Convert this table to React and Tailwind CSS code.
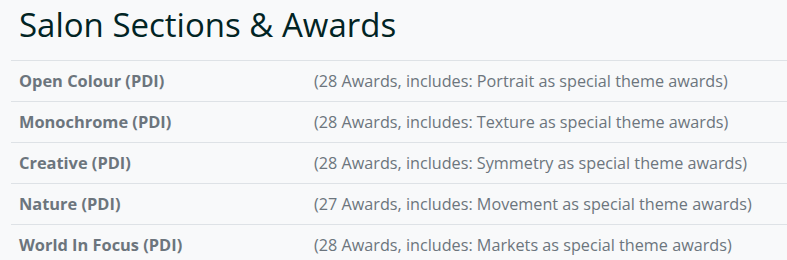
import React from 'react';

const sections = [
    { name: 'Open Colour (PDI)', awards: 28, theme: 'Portrait' },
    { name: 'Monochrome (PDI)', awards: 28, theme: 'Texture' },
    { name: 'Creative (PDI)', awards: 28, theme: 'Symmetry' },
    { name: 'Nature (PDI)', awards: 27, theme: 'Movement' },
    { name: 'World In Focus (PDI)', awards: 28, theme: 'Markets' },
];

const App = () => {
    return (
        <div className="min-h-[260px] bg-[#f8f9fa] pl-[11px] pt-[1px] font-['Open_Sans',sans-serif] overflow-hidden">
            <h2 className="pl-[8px] text-[33px] leading-[48px] text-[#012424] mb-[11px]">Salon Sections &amp; Awards</h2>
            <table className="w-[800px] border-collapse">
                <tbody>
                    {sections.map((s) => (
                        <tr key={s.name} className="border-t border-[#dee2e6] h-[41px]">
                            <td className="w-[295px] px-[8px] text-[16.4px] font-bold text-[#6c757d]">{s.name}</td>
                            <td className="px-[8px] text-[16.2px] text-[#6c757d]">
                                ({s.awards} Awards, includes: {s.theme} as special theme awards)
                            </td>
                        </tr>
                    ))}
                </tbody>
            </table>
        </div>
    );
};

export default App;
